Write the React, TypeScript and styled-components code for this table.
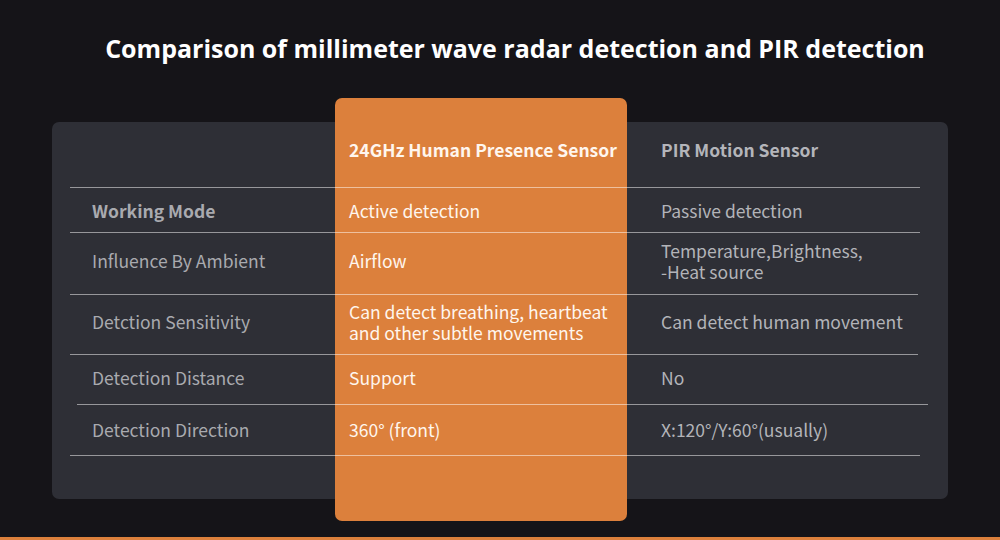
import React from "react";
import styled, { createGlobalStyle } from "styled-components";

const GlobalStyle = createGlobalStyle`
  html, body {
    margin: 0;
    padding: 0;
    background: #151418;
  }
  body {
    font-family: "Noto Sans CJK SC", "Noto Sans", sans-serif;
  }
`;

const Page = styled.div`
  width: 1000px;
  height: 540px;
  overflow: hidden;
  display: flex;
  flex-direction: column;
  background: #151418;
`;

const Title = styled.h1`
  margin: 32px 0 0;
  padding-left: 30px;
  height: 32px;
  line-height: 32px;
  text-align: center;
  color: #ffffff;
  font-family: "Open Sans", "Noto Sans", sans-serif;
  font-weight: 700;
  font-size: 25px;
  white-space: nowrap;
`;

const Stage = styled.div`
  position: relative;
  margin: 58px 52px 0;
`;

const Highlight = styled.div`
  position: absolute;
  left: 283px;
  top: -24px;
  width: 292px;
  height: 423px;
  background: #dc803c;
  border-radius: 7px;
  z-index: 1;
`;

const Panel = styled.div`
  position: relative;
  background: #2e2f36;
  border-radius: 7px;
  height: 377px;
  box-sizing: border-box;
  padding: 0 28px 0 18px;
`;

const Table = styled.div`
  position: relative;
  z-index: 2;
  display: flex;
  flex-direction: column;
`;

const Row = styled.div<{ $h: number; $padBottom?: number; $l?: number; $r?: number }>`
  position: relative;
  display: grid;
  grid-template-columns: 265px 292px 1fr;
  align-items: center;
  height: ${(p) => p.$h}px;
  box-sizing: border-box;
  padding-bottom: ${(p) => p.$padBottom ?? 0}px;

  &::after {
    content: "";
    position: absolute;
    left: ${(p) => p.$l ?? 0}px;
    right: ${(p) => p.$r ?? 0}px;
    bottom: 0;
    height: 1px;
    background: rgba(255, 255, 255, 0.5);
  }
`;

const Cell = styled.div<{ $col: 1 | 2 | 3; $bold?: boolean; $head?: boolean }>`
  padding-left: ${(p) => (p.$col === 1 ? 22 : p.$col === 2 ? 14 : 34)}px;
  font-size: 17.5px;
  line-height: 21.5px;
  font-weight: ${(p) => (p.$bold ? 700 : 400)};
  color: ${(p) =>
    p.$col === 2 ? "#fff6ee" : p.$col === 3 ? (p.$head ? "#b4b5ba" : "#b3b4b9") : "#a9aaaf"};
  white-space: nowrap;
`;

const BottomBar = styled.div`
  margin-top: auto;
  height: 3px;
  background: #dc803c;
`;

type RowData = {
  label: string;
  bold?: boolean;
  radar: React.ReactNode;
  pir: React.ReactNode;
  h: number;
  pb?: number;
  l?: number;
  r?: number;
};

const rows: RowData[] = [
  { label: "Working Mode", bold: true, radar: "Active detection", pir: "Passive detection", h: 45, pb: 0 },
  {
    label: "Influence By Ambient",
    radar: "Airflow",
    pir: (
      <>
        Temperature,Brightness,
        <br />
        -Heat source
      </>
    ),
    h: 62,
    pb: 6,
    r: 2,
  },
  {
    label: "Detction Sensitivity",
    radar: (
      <>
        Can detect breathing, heartbeat
        <br />
        and other subtle movements
      </>
    ),
    pir: "Can detect human movement",
    h: 60,
    pb: 6,
    r: 2,
  },
  { label: "Detection Distance", radar: "Support", pir: "No", h: 50, pb: 4, l: 7, r: -8 },
  { label: "Detection Direction", radar: "360° (front)", pir: "X:120°/Y:60°(usually)", h: 51, pb: 2 },
];

export default function App() {
  return (
    <Page>
      <GlobalStyle />
      <Title>Comparison of millimeter wave radar detection and PIR detection</Title>
      <Stage>
        <Highlight />
        <Panel>
          <Table>
            <Row $h={66} $padBottom={11}>
              <Cell $col={1} />
              <Cell $col={2} $bold $head>
                24GHz Human Presence Sensor
              </Cell>
              <Cell $col={3} $bold $head>
                PIR Motion Sensor
              </Cell>
            </Row>
            {rows.map((r) => (
              <Row key={r.label} $h={r.h} $padBottom={r.pb} $l={r.l} $r={r.r}>
                <Cell $col={1} $bold={r.bold}>
                  {r.label}
                </Cell>
                <Cell $col={2}>{r.radar}</Cell>
                <Cell $col={3}>{r.pir}</Cell>
              </Row>
            ))}
          </Table>
        </Panel>
      </Stage>
      <BottomBar />
    </Page>
  );
}
